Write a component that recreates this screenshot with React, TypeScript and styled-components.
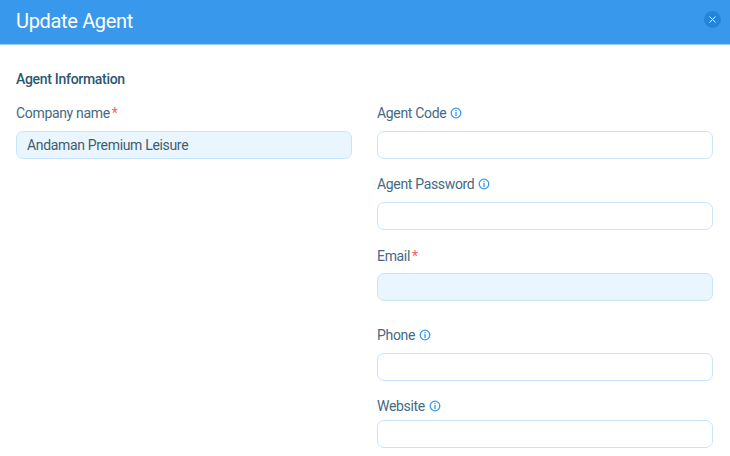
import React from "react";
import styled, { createGlobalStyle } from "styled-components";

const GlobalStyle = createGlobalStyle`
  * { box-sizing: border-box; }
  body { margin: 0; background: #fff; font-family: Roboto, sans-serif; overflow: hidden; }
`;

const Dialog = styled.main`
  width: 730px;
  height: 456px;
  background: #fff;
`;

const Header = styled.header`
  display: flex;
  justify-content: space-between;
  align-items: flex-start;
  height: 45px;
  padding: 8px 9px 0 16px;
  background: #3899ec;
  border-bottom: 1px solid #9bccf5;
`;

const Title = styled.h1`
  margin: 0;
  font-size: 20px;
  line-height: 26px;
  font-weight: 400;
  letter-spacing: -0.33px;
  color: #fff;
`;

const CloseButton = styled.button`
  display: flex;
  width: 17px;
  height: 17px;
  margin-top: 3px;
  padding: 0;
  border: 0;
  border-radius: 50%;
  background: #2684d8;
  align-items: center;
  justify-content: center;
`;

const Form = styled.form`
  padding: 25px 17px 0 16px;
`;

const SectionTitle = styled.h2`
  margin: 0 0 16px;
  font-size: 14px;
  line-height: 18px;
  font-weight: 500;
  letter-spacing: -0.3px;
  color: #2b5672;
`;

const Columns = styled.div`
  display: grid;
  grid-template-columns: 336px 336px;
  column-gap: 25px;
`;

const Column = styled.div`
  display: flex;
  flex-direction: column;
`;

const Field = styled.label<{ $height?: number; $gap?: number }>`
  display: flex;
  flex-direction: column;
  gap: ${(p) => p.$gap ?? 9}px;
  height: ${(p) => p.$height ?? 71}px;
`;

const Label = styled.span`
  display: flex;
  align-items: center;
  height: 18px;
  font-size: 14px;
  line-height: 18px;
  letter-spacing: -0.33px;
  color: #456983;
`;

const Required = styled.span`
  margin-left: 2px;
  color: #ff5c5c;
`;

const InfoSvg = styled.svg`
  margin-left: 4px;
`;

const Input = styled.input<{ $filled?: boolean }>`
  width: 100%;
  height: 28px;
  padding: 0 10px;
  border: 1px solid #c7e6fe;
  border-radius: 7px;
  outline: 0;
  background: ${(p) => (p.$filled ? "#e9f6ff" : "#fff")};
  font: 400 14px Roboto, sans-serif;
  letter-spacing: -0.33px;
  color: #435c6d;
`;

const InfoIcon = () => (
  <InfoSvg width="12" height="12" viewBox="0 0 12 12" fill="none" stroke="#3899ec" strokeWidth="1.3">
    <circle cx="6" cy="6" r="4.8" />
    <path d="M6 5V9M6 3v1.2" />
  </InfoSvg>
);

type FieldProps = { label: string; required?: boolean; value?: string; height?: number; gap?: number };

const FormField = ({ label, required, value = "", height, gap }: FieldProps) => (
  <Field $height={height} $gap={gap}>
    <Label>
      {label}
      {required ? <Required>*</Required> : <InfoIcon />}
    </Label>
    <Input $filled={required} defaultValue={value} />
  </Field>
);

export default function App() {
  return (
    <Dialog>
      <GlobalStyle />
      <Header>
        <Title>Update Agent</Title>
        <CloseButton aria-label="Close">
          <svg width="9" height="9" viewBox="0 0 9 9" stroke="#fff" fill="none">
            <path d="M1.5 1.5l6 6M7.5 1.5l-6 6" />
          </svg>
        </CloseButton>
      </Header>
      <Form>
        <SectionTitle>Agent Information</SectionTitle>
        <Columns>
          <Column>
            <FormField label="Company name" required value="Andaman Premium Leisure" />
          </Column>
          <Column>
            <FormField label="Agent Code" />
            <FormField label="Agent Password" height={72} />
            <FormField label="Email" required height={79} gap={8} />
            <FormField label="Phone" />
            <FormField label="Website" gap={5} />
          </Column>
        </Columns>
      </Form>
    </Dialog>
  );
}
